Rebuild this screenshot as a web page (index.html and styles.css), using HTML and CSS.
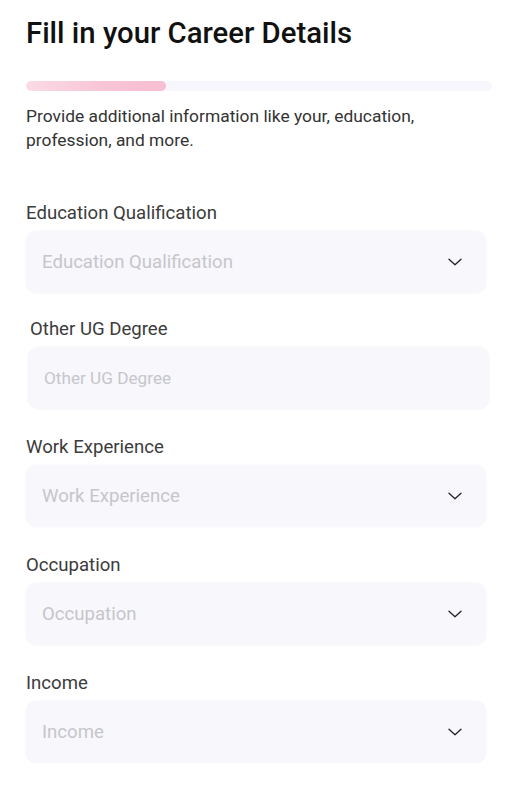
FILE: index.html
```html
<!DOCTYPE html>
<html>
<head>
<meta charset="utf-8">
<link rel="stylesheet" href="styles.css">
</head>
<body>
<div class="page">
  <h1 class="title">Fill in your Career Details</h1>
  <div class="progress"><div class="progress-fill"></div></div>
  <p class="desc">Provide additional information like your, education, profession, and more.</p>

  <div class="field">
    <div class="label">Education Qualification</div>
    <div class="box select">
      <span class="ph">Education Qualification</span>
      <svg class="chev" width="14" height="8" viewBox="0 0 14 8"><path d="M1 1.2 L7 6.8 L13 1.2" fill="none" stroke="#222" stroke-width="1.3" stroke-linecap="round" stroke-linejoin="round"/></svg>
    </div>
  </div>

  <div class="field field-shift">
    <div class="label">Other UG Degree</div>
    <div class="box input">
      <span class="ph ph-small">Other UG Degree</span>
    </div>
  </div>

  <div class="field">
    <div class="label">Work Experience</div>
    <div class="box select">
      <span class="ph">Work Experience</span>
      <svg class="chev" width="14" height="8" viewBox="0 0 14 8"><path d="M1 1.2 L7 6.8 L13 1.2" fill="none" stroke="#222" stroke-width="1.3" stroke-linecap="round" stroke-linejoin="round"/></svg>
    </div>
  </div>

  <div class="field">
    <div class="label">Occupation</div>
    <div class="box select">
      <span class="ph">Occupation</span>
      <svg class="chev" width="14" height="8" viewBox="0 0 14 8"><path d="M1 1.2 L7 6.8 L13 1.2" fill="none" stroke="#222" stroke-width="1.3" stroke-linecap="round" stroke-linejoin="round"/></svg>
    </div>
  </div>

  <div class="field">
    <div class="label">Income</div>
    <div class="box select">
      <span class="ph">Income</span>
      <svg class="chev" width="14" height="8" viewBox="0 0 14 8"><path d="M1 1.2 L7 6.8 L13 1.2" fill="none" stroke="#222" stroke-width="1.3" stroke-linecap="round" stroke-linejoin="round"/></svg>
    </div>
  </div>
</div>
</body>
</html>
```

FILE: styles.css
```css
* { box-sizing: border-box; }
html, body { margin: 0; padding: 0; background: #fff; }
body { font-family: Roboto, "Noto Sans", Arial, sans-serif; color: #222; }

.page {
  padding: 13px 26px 0 26px;
}

.title {
  margin: 0;
  font-size: 29.3px;
  font-weight: 500;
  line-height: 40px;
  color: #111;
}

.progress {
  margin-top: 28px;
  width: 466px;
  height: 10px;
  border-radius: 5px;
  background: #f7f6fc;
  overflow: hidden;
}
.progress-fill {
  width: 140px;
  height: 100%;
  border-radius: 5px;
  background: linear-gradient(90deg, #fadbe5 0%, #f8c3d4 60%, #f7bfd1 100%);
}

.desc {
  margin: 13px 0 0 0;
  font-size: 17.4px;
  line-height: 24px;
  color: #333;
}

.field {
  display: flex;
  flex-direction: column;
}
.field + .field { margin-top: 26px; }
.desc + .field { margin-top: 49px; }
.field + .field-shift { margin-top: 24px; }

.label {
  font-size: 18.6px;
  line-height: 24px;
  color: #3c3c3c;
  margin-bottom: 6px;
}

.box {
  width: 460px;
  height: 62px;
  border-radius: 11px;
  background: #f8f7fc;
  box-shadow: 0 0 2px rgba(230, 228, 240, 0.6);
  display: flex;
  align-items: center;
  justify-content: space-between;
  padding: 0 24px 0 16px;
}

.field-shift { padding-left: 4px; }
.field-shift .box { width: 461px; margin-left: -2px; }

.ph {
  font-size: 18.6px;
  color: #c6c6cb;
}
.ph-small { font-size: 17.2px; }

.chev { flex: none; }
```
